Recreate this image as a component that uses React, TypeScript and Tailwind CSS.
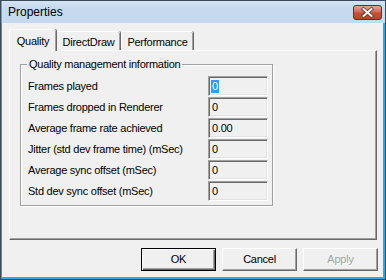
import React from 'react'

const rows = [
  { label: 'Frames played', value: '0', selected: true },
  { label: 'Frames dropped in Renderer', value: '0' },
  { label: 'Average frame rate achieved', value: '0.00' },
  { label: 'Jitter (std dev frame time) (mSec)', value: '0' },
  { label: 'Average sync offset (mSec)', value: '0' },
  { label: 'Std dev sync offset (mSec)', value: '0' },
]

// red caption close button, drawn as one svg
const CloseButton = () => (
  <svg width="29" height="15" viewBox="0 0 29 15" className="block">
    <defs>
      <linearGradient id="closeRed" x1="0" y1="0" x2="0" y2="1">
        <stop offset="0" stopColor="#e9aa9c" />
        <stop offset="0.45" stopColor="#d06a58" />
        <stop offset="0.55" stopColor="#c4503c" />
        <stop offset="1" stopColor="#b8432f" />
      </linearGradient>
    </defs>
    <rect x="0.5" y="0.5" width="28" height="14" rx="2.5" fill="url(#closeRed)" stroke="#6e2a2a" />
    <path d="M10.5 4 L18.5 11 M18.5 4 L10.5 11" stroke="#6a2a24" strokeWidth="3.6" strokeLinecap="square" />
    <path d="M10.5 4 L18.5 11 M18.5 4 L10.5 11" stroke="#ffffff" strokeWidth="2" strokeLinecap="square" />
  </svg>
)

const Field = ({ value, selected }: { value: string; selected?: boolean }) => (
  <div className="flex h-[20px] w-[60px] items-center border border-t-[#a0a0a0] border-l-[#a0a0a0] border-b-white border-r-white bg-[#f0f0f0] pl-[2px] shadow-[inset_1px_1px_0_#696969,inset_-1px_-1px_0_#e3e3e3]">
    {selected ? (
      <span className="bg-[#3399ff] px-px leading-[13px] text-white">{value}</span>
    ) : (
      <span className="pl-px">{value}</span>
    )}
  </div>
)

export default function App() {
  return (
    <div className="flex h-[280px] w-[386px] flex-col border border-[#3a4b5e] bg-[#f0f0f0] font-['Liberation_Sans',Arial,sans-serif] text-[11px] tracking-[-0.25px] text-black">
      <div className="flex h-[22px] shrink-0 items-center border-l border-l-[#5fa8de] bg-[#c6d9ee] pl-[6px] pr-[3px] shadow-[inset_0_4px_6px_-2px_#dbe8f6]">
        <span className="text-[12px] tracking-normal">Properties</span>
        <div className="ml-auto">
          <CloseButton />
        </div>
      </div>
      <div className="flex flex-1 flex-col border-b-2 border-l border-r-2 border-b-[#2fa8e4] border-l-[#2f9ae0] border-r-[#2fa8e4] pl-[7px] pr-[4px] pt-[6px]">
        <div className="flex h-[21px] items-end">
          <div className="relative z-10 -mb-px flex h-[22px] w-[47px] items-start justify-center rounded-t-[2px] border-l border-t border-l-white border-t-white bg-[#f0f0f0] pt-[3px] shadow-[inset_-1px_0_0_#a0a0a0,1px_0_0_#696969]">
            Quality
          </div>
          <div className="flex h-[19px] w-[64px] items-start justify-center rounded-t-[2px] border-l border-t border-l-white border-t-white pt-[2px] shadow-[inset_-1px_0_0_#a0a0a0,1px_0_0_#696969]">
            DirectDraw
          </div>
          <div className="ml-px flex h-[19px] w-[72px] items-start justify-center rounded-t-[2px] border-l border-t border-l-white border-t-white pt-[2px] shadow-[inset_-1px_0_0_#a0a0a0,1px_0_0_#696969]">
            Performance
          </div>
        </div>
        <div className="h-[190px] w-[368px] border border-b-[#696969] border-l-white border-r-[#696969] border-t-white pl-[10px] pt-[13px] shadow-[inset_-1px_-1px_0_#a0a0a0]">
          <div className="relative w-[253px] border border-[#a0a0a0] pb-[4px] pl-[7px] pr-[4px] pt-[11px] shadow-[1px_1px_0_#fff,inset_1px_1px_0_#fff]">
            <span className="absolute -top-[8px] left-[6px] bg-[#f0f0f0] px-[2px] leading-[14px]">
              Quality management information
            </span>
            <div className="flex flex-col gap-px">
              {rows.map((r) => (
                <div key={r.label} className="flex items-center justify-between">
                  <span>{r.label}</span>
                  <Field value={r.value} selected={r.selected} />
                </div>
              ))}
            </div>
          </div>
        </div>
        <div className="mt-[8px] flex justify-end gap-[6px] pr-px">
          <button
            type="button"
            className="h-[23px] w-[75px] border border-black bg-[#f0f0f0] shadow-[inset_1px_1px_0_#fff,inset_-1px_-1px_0_#696969,inset_-2px_-2px_0_#a0a0a0]"
          >
            OK
          </button>
          <button
            type="button"
            className="h-[23px] w-[75px] border border-b-[#696969] border-l-white border-r-[#696969] border-t-white bg-[#f0f0f0] shadow-[inset_-1px_-1px_0_#a0a0a0]"
          >
            Cancel
          </button>
          <button
            type="button"
            className="h-[23px] w-[75px] border border-b-[#696969] border-l-white border-r-[#696969] border-t-white bg-[#f0f0f0] text-[#a0a0a0] shadow-[inset_-1px_-1px_0_#a0a0a0] [text-shadow:1px_1px_0_#fff]"
          >
            Apply
          </button>
        </div>
      </div>
    </div>
  )
}
